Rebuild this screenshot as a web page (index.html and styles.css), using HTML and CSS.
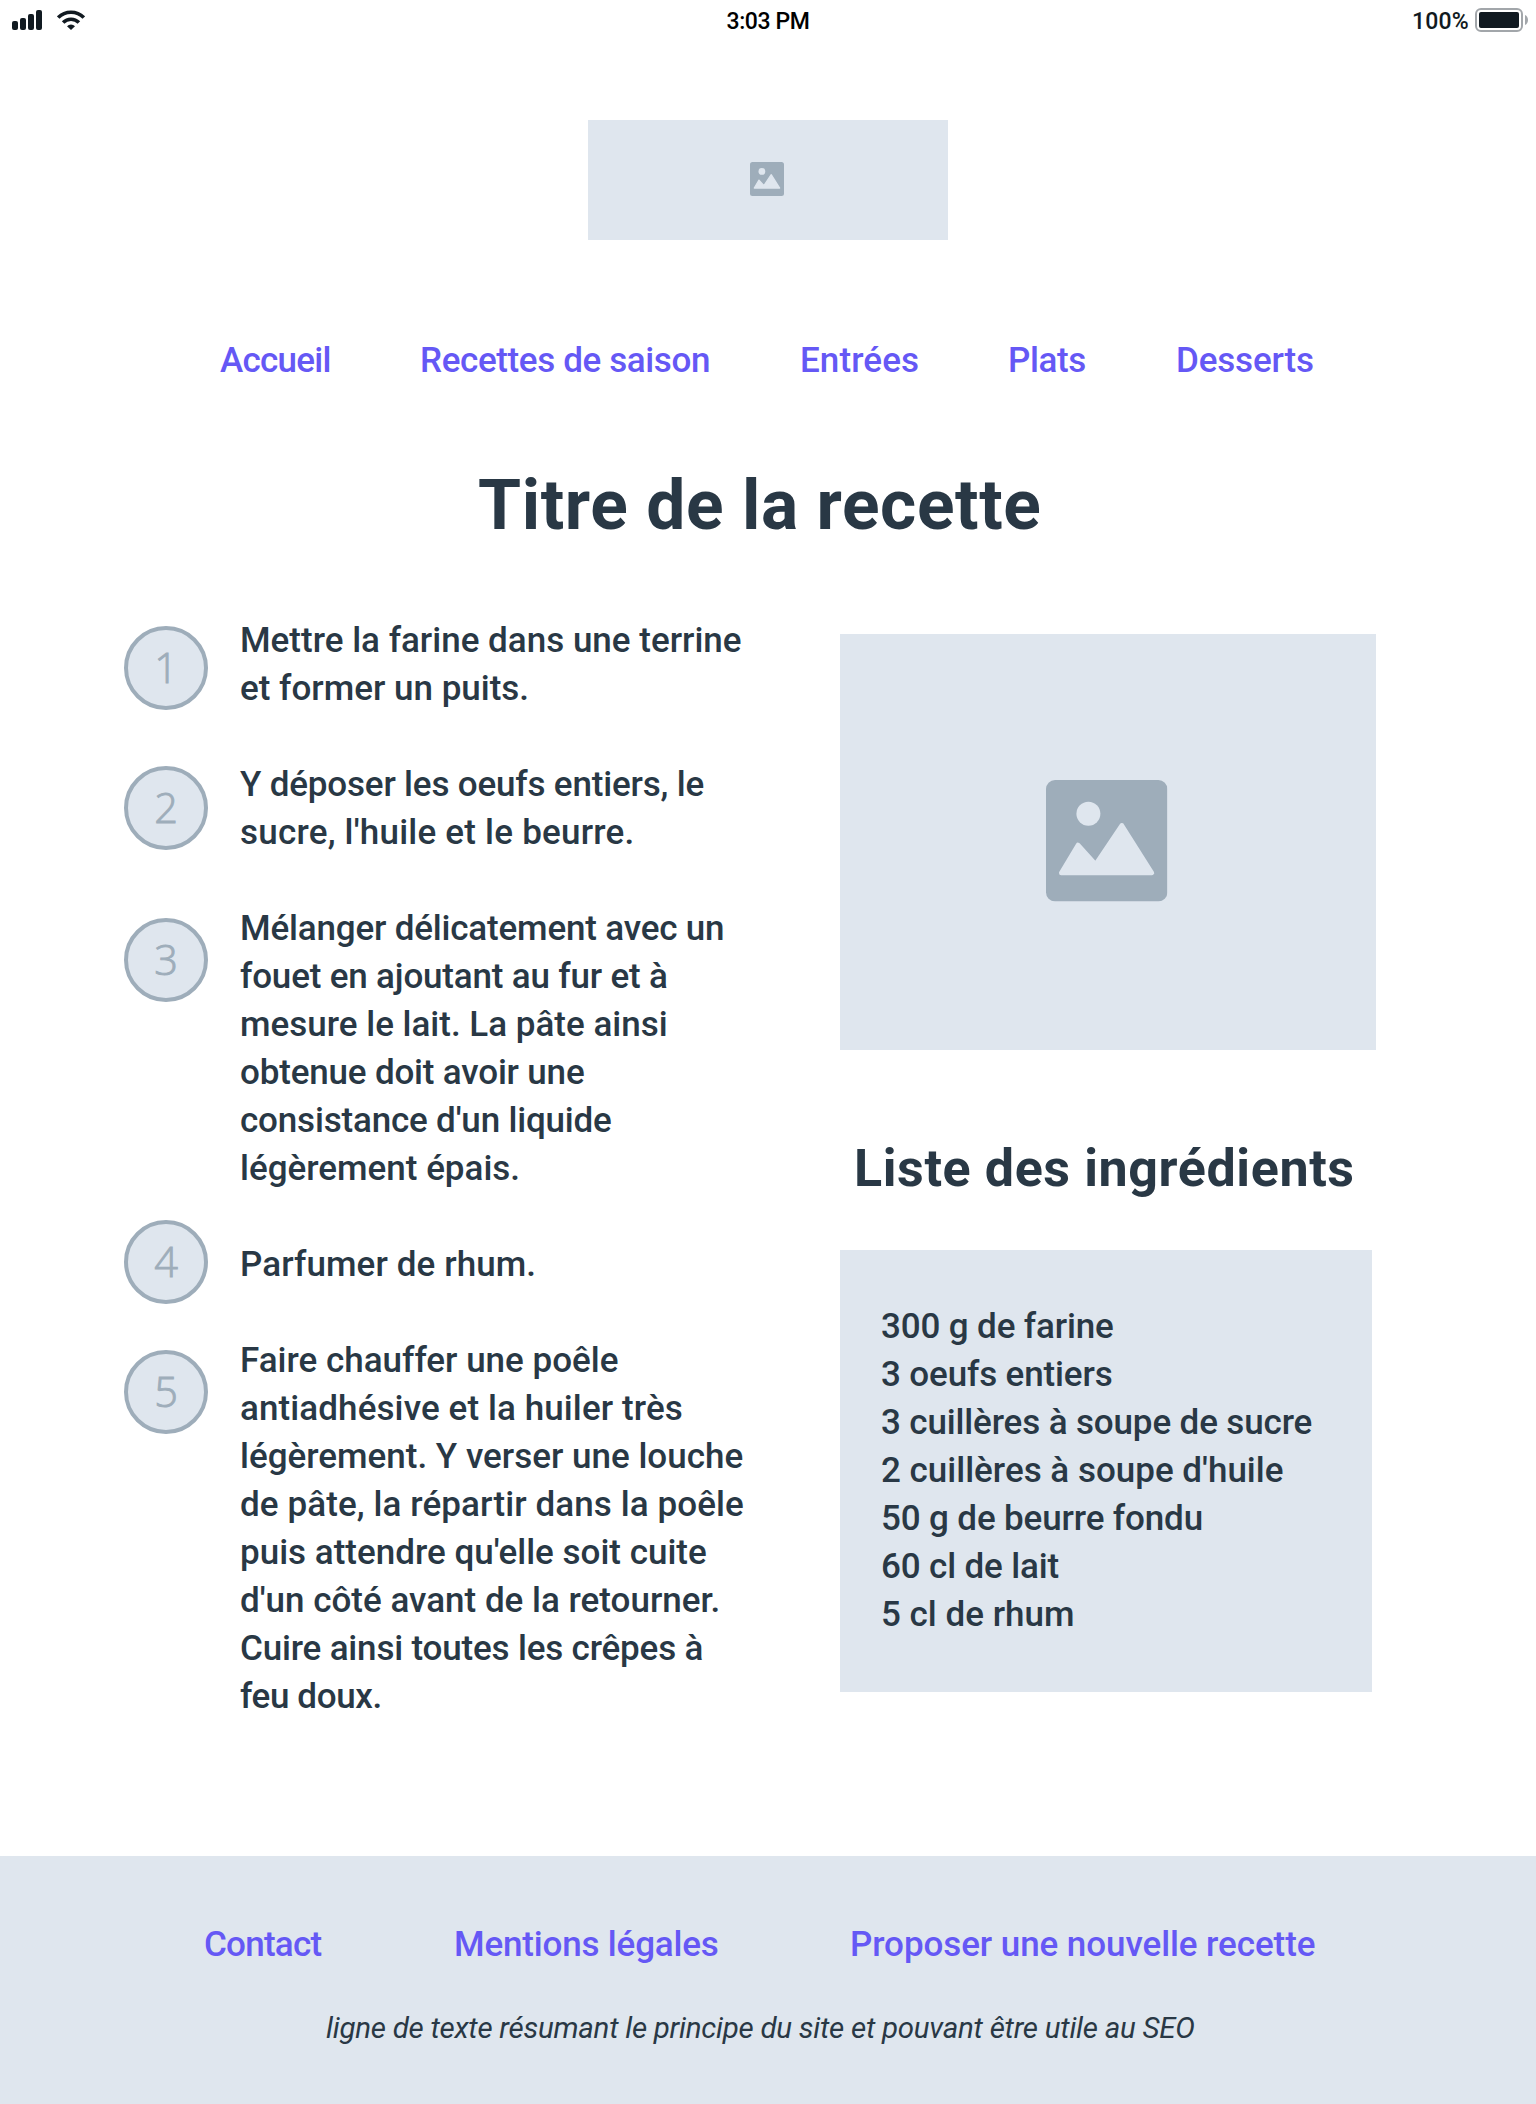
FILE: index.html
```html
<!DOCTYPE html>
<html lang="fr">
<head>
<meta charset="utf-8">
<title>Titre de la recette</title>
<link rel="stylesheet" href="styles.css">
</head>
<body>
<svg width="0" height="0" class="defs" aria-hidden="true">
  <symbol id="picture" viewBox="0 0 121.4 121.4">
    <rect width="121.4" height="121.4" rx="9" fill="#9eadba"/>
    <circle cx="42.4" cy="33.8" r="12" fill="#dfe6ee"/>
    <path d="M15.2 93L32 64.8 49.6 84.2 75.8 45.2 106 93z" fill="#dfe6ee" stroke="#dfe6ee" stroke-width="4.4" stroke-linejoin="round"/>
  </symbol>
</svg>

<div class="status">
  <div class="status-left">
    <svg width="30" height="20" viewBox="0 0 30 20" fill="#111a21">
      <rect y="11" width="6" height="9" rx="2"/><rect x="8" y="8" width="6" height="12" rx="2"/><rect x="16" y="4" width="6" height="16" rx="2"/><rect x="24" width="6" height="20" rx="2"/>
    </svg>
    <svg width="28" height="20" viewBox="0 0 28 20" fill="none" stroke="#111a21" stroke-width="3.6">
      <path d="M1.2 7.6a18 18 0 0 1 25.6 0"/>
      <path d="M6.1 12.5a11.2 11.2 0 0 1 15.8 0"/>
      <path d="M10 16.2a5.7 5.7 0 0 1 8 0L14 20z" fill="#111a21" stroke="none"/>
    </svg>
  </div>
  <div class="time">3:03 PM</div>
  <div class="status-right">
    <span>100%</span>
    <svg width="54" height="24" viewBox="0 0 54 24">
      <rect x="1" y="1" width="46" height="22" rx="5" fill="none" stroke="#a2a6aa" stroke-width="2"/>
      <rect x="4" y="4" width="40" height="16" rx="2" fill="#111a21"/>
      <path d="M50 7c4 1.500 4 8.500 0 10z" fill="#a2a6aa"/>
    </svg>
  </div>
</div>

<header>
  <div class="logo"><svg width="34" height="34"><use href="#picture"/></svg></div>
  <nav class="nav">
    <a class="tighter">Accueil</a><a class="tight">Recettes de saison</a><a class="open">Entrées</a><a class="tight">Plats</a><a class="snug">Desserts</a>
  </nav>
</header>

<main>
  <h1>Titre de la recette</h1>
  <div class="columns">
    <ol class="steps">
      <li><span class="num n1">1</span><p>Mettre la farine dans une terrine<br>et former un puits.</p></li>
      <li><span class="num n2">2</span><p><span class="snug">Y déposer les oeufs entiers, le</span><br><span class="loose">sucre, l'huile et le beurre.</span></p></li>
      <li><span class="num n3">3</span><p class="snug">Mélanger délicatement avec un<br>fouet en ajoutant au fur et à<br><span class="even">mesure le lait. La pâte ainsi</span><br>obtenue doit avoir une<br>consistance d'un liquide<br><span class="even">légèrement épais.</span></p></li>
      <li><span class="num n4">4</span><p class="open">Parfumer de rhum.</p></li>
      <li><span class="num n5">5</span><p>Faire chauffer une poêle<br><span class="open">antiadhésive et la huiler très</span><br>légèrement. Y verser une louche<br><span class="open">de pâte, la répartir dans la poêle</span><br>puis attendre qu'elle soit cuite<br>d'un côté avant de la retourner.<br><span class="snug">Cuire ainsi toutes les crêpes à</span><br><span class="tight">feu doux.</span></p></li>
    </ol>
    <section class="side">
      <div class="photo"><svg width="121.400" height="121.400"><use href="#picture"/></svg></div>
      <h2>Liste des ingrédients</h2>
      <ul class="ingredients">
        <li>300 g de farine</li>
        <li>3 oeufs entiers</li>
        <li>3 cuillères à soupe de sucre</li>
        <li class="even">2 cuillères à soupe d'huile</li>
        <li>50 g de beurre fondu</li>
        <li>60 cl de lait</li>
        <li class="even">5 cl de rhum</li>
      </ul>
    </section>
  </div>
</main>

<footer>
  <nav class="links">
    <a class="tighter">Contact</a><a class="snug">Mentions légales</a><a>Proposer une nouvelle recette</a>
  </nav>
  <p class="tagline">ligne de texte résumant le principe du site et pouvant être utile au SEO</p>
</footer>
</body>
</html>
```
FILE: styles.css
```css
* { box-sizing: border-box; margin: 0; padding: 0; }

body {
  display: flex;
  flex-direction: column;
  width: 1536px;
  height: 2104px;
  background: #fff;
  color: #293845;
  font: 500 35px/48px Roboto, "Liberation Sans", sans-serif;
  white-space: nowrap;
}

svg { display: block; }
.defs { position: absolute; }

.even { letter-spacing: 0; }
.open { letter-spacing: 0.1px; }
.snug { letter-spacing: -0.18px; }
.tight { letter-spacing: -0.38px; }
.tighter { letter-spacing: -0.75px; }
.loose { letter-spacing: 0.22px; }

.status {
  display: grid;
  grid-template-columns: 1fr auto 1fr;
  height: 40px;
  padding: 0 7px 0 12px;
  font-size: 23px;
  line-height: 43px;
  color: #111a21;
}
.status-left { display: flex; gap: 15px; padding-top: 10px; }
.time { color: #000; letter-spacing: -0.4px; padding-right: 5px; }
.status-right { display: flex; justify-content: flex-end; gap: 6px; }
.status-right span { letter-spacing: 0.2px; }
.status-right svg { margin-top: 8px; }

.logo {
  display: flex;
  align-items: center;
  justify-content: center;
  width: 360px;
  height: 120px;
  margin: 80px auto 97px;
  padding-right: 2px;
  padding-bottom: 2px;
  background: #dfe6ee;
}

.nav {
  display: grid;
  grid-template-columns: 200px 380px 208px 168px auto;
  padding-left: 220px;
  color: #6558f5;
}

h1 {
  margin: 73px 0 63px 478px;
  font-size: 69.5px;
  line-height: 96px;
  font-weight: 700;
  letter-spacing: 0.6px;
}

.columns {
  display: grid;
  grid-template-columns: 716px 536px;
  padding-left: 124px;
}

.steps { list-style: none; }
.steps li {
  display: flex;
  align-items: flex-start;
  gap: 32px;
  margin-bottom: 48px;
}
.num {
  flex: none;
  width: 84px;
  height: 84px;
  border: 4px solid #9eadba;
  border-radius: 50%;
  background: #dfe6ee;
  color: #9eadba;
  font: 300 41.5px/74px "Open Sans", "Noto Sans", sans-serif;
  -webkit-text-stroke: 0.9px #9eadba;
  text-align: center;
}
.n1 { margin-top: 9px; }
.n2 { margin-top: 5px; }
.n3 { margin-top: 13px; }
.n4 { margin: -21px 0 -15px; }
.n5 { margin-top: 13px; }

.side { padding-top: 17px; }
.photo {
  display: flex;
  align-items: center;
  justify-content: center;
  height: 416px;
  padding-right: 2px;
  padding-bottom: 2px;
  background: #dfe6ee;
}
h2 {
  margin: 83px 0 45px 14px;
  font-size: 52px;
  line-height: 72px;
  font-weight: 700;
  letter-spacing: 0.6px;
}
.ingredients {
  width: 532px;
  height: 442px;
  padding: 53px 0 0 41px;
  background: #dfe6ee;
  list-style: none;
  letter-spacing: -0.14px;
}

footer {
  margin-top: auto;
  height: 248px;
  padding-top: 65px;
  background: #dfe6ee;
}
.links {
  display: grid;
  grid-template-columns: 250px 396px auto;
  padding-left: 204px;
  color: #6558f5;
}
.links a:last-child { letter-spacing: -0.08px; }
.tagline {
  margin: 39px 0 0 326px;
  font-size: 29.5px;
  line-height: 40px;
  font-weight: 400;
  font-style: italic;
  letter-spacing: -0.26px;
}
```
